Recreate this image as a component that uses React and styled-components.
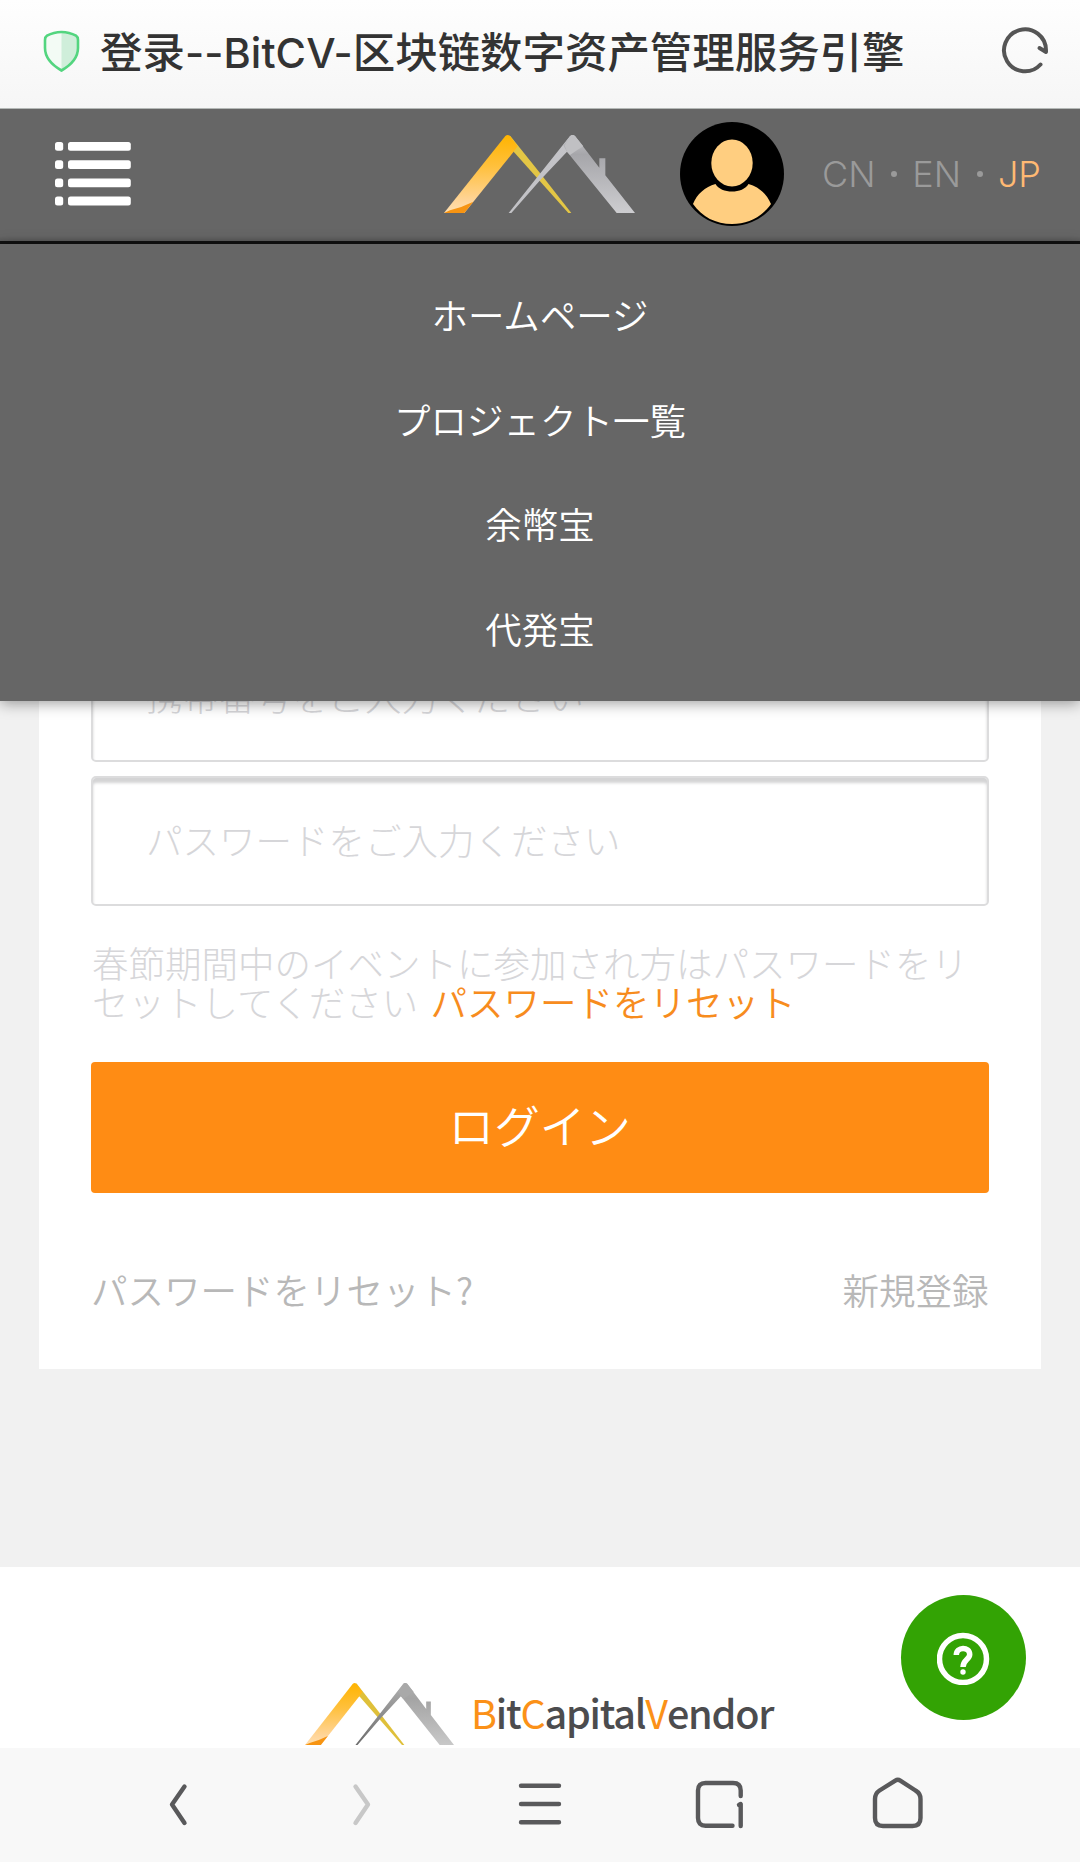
import React, { useId } from "react";
import styled, { createGlobalStyle } from "styled-components";

const GlobalStyle = createGlobalStyle`
  *, *::before, *::after { box-sizing: border-box; }
  body { margin: 0; background: #fff; }
  button { font: inherit; border: 0; padding: 0; background: none; }
  a { text-decoration: none; color: inherit; }
  svg { display: block; flex: none; }
`;

const jp = `"Noto Sans CJK JP", "Noto Sans CJK SC", sans-serif`;

const Screen = styled.div`
  width: 1080px;
  height: 1862px;
  display: flex;
  flex-direction: column;
  overflow: hidden;
  font-family: ${jp};
  font-weight: 350;
  font-size: 36.5px;
`;

const TitleBar = styled.header`
  flex: none;
  height: 109px;
  padding: 0 30px 6px 42px;
  display: flex;
  align-items: center;
  background: linear-gradient(#fefefe, #f6f6f6);
  border-bottom: 1px solid #b4b8b6;
`;

const PageTitle = styled.h1`
  flex: 1;
  margin: 0 0 0 19px;
  padding-top: 4px;
  font-family: Roboto, "Noto Sans CJK SC", sans-serif;
  font-weight: 500;
  font-size: 42.45px;
  line-height: 60px;
  color: #333;
  white-space: nowrap;
`;

const Latin = styled.span`
  font-family: Inter, sans-serif;
  font-size: 41.5px;
  letter-spacing: 0.1px;
`;

const WebView = styled.div`
  flex: 1;
  min-height: 0;
  position: relative;
  display: flex;
  flex-direction: column;
  overflow: hidden;
`;

const SiteHeader = styled.div`
  flex: none;
  height: 135px;
  padding: 0 39px 5px 55px;
  display: flex;
  align-items: center;
  background: linear-gradient(#666 0 127px, #5c5c5c 132px, #111 132px);
`;

const HeaderLogo = styled.div`
  margin: 0 45px 0 313px;
`;

const Languages = styled.nav`
  flex: 1;
  display: flex;
  align-items: center;
  justify-content: space-between;
  margin-left: 38px;
  font-family: Inter, "Liberation Sans", sans-serif;
  font-weight: 300;
  font-size: 36px;
  color: #9a9a9a;
`;

const Language = styled.a`
  color: ${(p) => (p.$active ? "#ffb973" : "inherit")};
`;

const Dot = styled.span`
  width: 6px;
  height: 6px;
  border-radius: 50%;
  background: #9a9a9a;
`;

const Menu = styled.nav`
  position: absolute;
  top: 135px;
  left: 0;
  right: 0;
  height: 457px;
  padding: 18px 0 20px;
  display: flex;
  flex-direction: column;
  background: #666;
  box-shadow: 0 2px 14px rgba(0, 0, 0, 0.4);
`;

const MenuItem = styled.a`
  flex: 1;
  display: flex;
  align-items: center;
  justify-content: center;
  color: #fff;
`;

const Main = styled.main`
  flex: none;
  height: 1323px;
  padding: 256px 39px 0;
  background: #f1f1f1;
`;

const Card = styled.form`
  height: 869px;
  padding: 132px 52.5px 0 52px;
  background: #fff;
`;

const Field = styled.input`
  display: block;
  width: 100%;
  height: 130px;
  margin-bottom: 14px;
  padding: 0 53px 4px;
  border: 2px solid #dcdcdd;
  border-radius: 5px;
  background: #fff;
  box-shadow: inset 0 5px 3px #d4d4d5;
  font: inherit;
  font-weight: 300;
  &::placeholder { color: #d6d6d9; opacity: 1; }
`;

const Notice = styled.p`
  margin: 37px 0 41px;
  padding-left: 1px;
  line-height: 39px;
  font-weight: 300;
  color: #d6d6d9;
`;

const NoticeLink = styled.a`
  display: inline-block;
  margin-left: 4px;
  font-weight: 350;
  color: #f78c1e;
`;

const Submit = styled.button`
  width: 100%;
  height: 131px;
  display: block;
  padding-bottom: 8px;
  border-radius: 4px;
  background: #ff8c14;
  color: #fff;
  font-size: 45.6px;
`;

const CardLinks = styled.div`
  display: flex;
  justify-content: space-between;
  margin-top: 70px;
  line-height: 54px;
  color: #b8b8b8;
`;

const Footer = styled.footer`
  flex: 1;
  min-height: 0;
  padding: 116px 0 0 305px;
  display: flex;
  align-items: flex-start;
  gap: 17px;
  background: #fff;
`;

const Brand = styled.div`
  margin-top: -1.5px;
  font-family: "Noto Sans CJK SC", sans-serif;
  font-weight: 500;
  font-size: 39.5px;
  line-height: 60px;
  letter-spacing: -1.2px;
  color: #4c4c4e;
`;

const Initial = styled.span`
  font-weight: 400;
  color: #fb9118;
`;

const HelpButton = styled.button`
  position: absolute;
  right: 54px;
  bottom: 28px;
  width: 125px;
  height: 125px;
  border-radius: 50%;
  background: #33a304;
  display: flex;
  align-items: center;
  justify-content: center;
`;

const Toolbar = styled.nav`
  flex: none;
  height: 114px;
  padding: 0 90px;
  display: grid;
  grid-template-columns: repeat(5, 1fr);
  align-items: center;
  justify-items: center;
  background: #f8f8f8;
`;

const ToolIcon = styled.svg.attrs({ width: 60, height: 60, viewBox: "0 0 60 60" })`
  fill: none;
  stroke: ${(p) => (p.$muted ? "#c8c8c8" : "#59595b")};
  stroke-width: 4.4;
  stroke-linecap: round;
  stroke-linejoin: round;
`;

function Roofs({ width, height, dark }) {
  const id = useId();
  return (
    <svg width={width} height={height} viewBox="42 74 573 234" preserveAspectRatio="none">
      <defs>
        <linearGradient id={id + "g"} x1="0" y1="0" x2="0" y2="1">
          <stop offset="0" stopColor="#ffb400" />
          <stop offset="0.4" stopColor="#ffc03c" />
          <stop offset="0.85" stopColor="#ffd59a" />
          <stop offset="1" stopColor="#ffe0b0" />
        </linearGradient>
        <linearGradient id={id + "s"} x1="0" y1="0" x2="0" y2="1">
          <stop offset="0" stopColor={dark ? "#c4c4c8" : "#b0b0b0"} />
          <stop offset="0.25" stopColor={dark ? "#a6a6aa" : "#a4a4a4"} />
          <stop offset="1" stopColor={dark ? "#cdcdd0" : "#c8c8c8"} />
        </linearGradient>
        <linearGradient id={id + "t"} x1="0" y1="0" x2="0" y2="1">
          <stop offset="0" stopColor={dark ? "#c4c4c8" : "#b0b0b0"} />
          <stop offset="1" stopColor={dark ? "#c2c2c6" : "#6c6c6c"} />
        </linearGradient>
      </defs>
      <path d="M238 76L251 124L415 308H424L333 192L241 77Z" fill={dark ? "#e3c645" : "#dfc03a"} />
      <path d="M42 308L226 77Q233 71 240 77L263 108L251 124L103 308Z" fill={`url(#${id}g)`} />
      <path d="M42 308L60 300Q98 290 130 274L103 308Z" fill="#f79412" />
      <path d="M236 308L420 77L430 74L426 104L411 124L333 207L244 308Z" fill={`url(#${id}t)`} />
      <path d="M508 144H526V195L615 308H560L411 124L400 105L421 77Q428 71 435 77L508 172Z" fill={`url(#${id}s)`} />
      <path d="M411 124L404 106L421 77Q428 71 435 77L460 108Q440 120 420 134Z" fill={dark ? "#c0c0c3" : "#a9a9a9"} />
    </svg>
  );
}

function Shield() {
  return (
    <svg width="39" height="44" viewBox="0 0 39 44">
      <path d="M19.5 3C25 3 30 4.500 34 6.700C36 8 36 9 36 11V19C36 28 29 36 19.500 41.500C10 36 3 28 3 19V11C3 9 3 8 5 6.700C9 4.500 14 3 19.500 3Z" fill="#f3fbf5" />
      <path d="M19.500 3C25 3 30 4.500 34 6.700C36 8 36 9 36 11V19C36 28 29 36 19.500 41.500Z" fill="#cfeeda" />
      <path d="M19.500 3C25 3 30 4.500 34 6.700C36 8 36 9 36 11V19C36 28 29 36 19.500 41.500C10 36 3 28 3 19V11C3 9 3 8 5 6.700C9 4.500 14 3 19.500 3Z" fill="none" stroke="#53d57f" strokeWidth="2.600" />
    </svg>
  );
}

function Reload() {
  return (
    <svg width="50" height="50" viewBox="0 0 50 50" fill="none" stroke="#555" strokeWidth="4" strokeLinejoin="round" strokeLinecap="round">
      <path d="M40.500 38.500A21 21 0 1 1 46 24.500" />
      <path d="M39.500 22L46 26" />
    </svg>
  );
}

function ListIcon() {
  return (
    <svg width="76" height="64" viewBox="0 0 76 64" fill="#fff">
      {[0, 18.200, 36.400, 54.600].map((y) => (
        <g key={y}>
          <rect x="0" y={y} width="8.200" height="8.800" rx="2.500" />
          <rect x="13" y={y} width="62.800" height="8.800" rx="2.500" />
        </g>
      ))}
    </svg>
  );
}

function Avatar() {
  return (
    <svg width="104" height="104" viewBox="0 0 104 104">
      <circle cx="52" cy="52" r="52" fill="#000" />
      <ellipse cx="52" cy="41" rx="20.700" ry="23.500" fill="#ffce80" />
      <path d="M35.500 62C41 72 63 72 68.500 62C79 65 87 72 91 82C82 95 68 102 52 102C36 102 22 95 13 82C17 72 25 65 35.500 62Z" fill="#ffce80" />
    </svg>
  );
}

const menuItems = ["ホームページ", "プロジェクト一覧", "余幣宝", "代発宝"];

export default function App() {
  return (
    <Screen>
      <GlobalStyle />
      <TitleBar>
        <Shield />
        <PageTitle>
          登录<Latin>--BitCV-</Latin>区块链数字资产管理服务引擎
        </PageTitle>
        <Reload />
      </TitleBar>

      <WebView>
        <SiteHeader>
          <ListIcon />
          <HeaderLogo>
            <Roofs width={191} height={78} dark />
          </HeaderLogo>
          <Avatar />
          <Languages>
            <Language>CN</Language>
            <Dot />
            <Language>EN</Language>
            <Dot />
            <Language $active>JP</Language>
          </Languages>
        </SiteHeader>

        <Main>
          <Card>
            <Field placeholder="携帯番号をご入力ください" />
            <Field placeholder="パスワードをご入力ください" />
            <Notice>
              春節期間中のイベントに参加され方はパスワードをリセットしてください{" "}
              <NoticeLink>パスワードをリセット</NoticeLink>
            </Notice>
            <Submit type="button">ログイン</Submit>
            <CardLinks>
              <a>パスワードをリセット?</a>
              <a>新規登録</a>
            </CardLinks>
          </Card>
        </Main>

        <Footer>
          <Roofs width={149} height={62} />
          <Brand>
            <Initial>B</Initial>it<Initial>C</Initial>apital<Initial>V</Initial>endor
          </Brand>
        </Footer>

        <Menu>
          {menuItems.map((label) => (
            <MenuItem key={label}>{label}</MenuItem>
          ))}
        </Menu>

        <HelpButton aria-label="help">
          <svg width="54" height="54" viewBox="0 0 54 54" fill="none" stroke="#fff" strokeWidth="5.500">
            <circle cx="26" cy="28" r="23.500" />
            <path d="M19.300 24C19.300 15.300 32.700 15.300 32.700 23.500C32.700 28.500 26 29 26 36" />
            <circle cx="26" cy="41" r="2.700" fill="#fff" stroke="none" />
          </svg>
        </HelpButton>
      </WebView>

      <Toolbar>
        <ToolIcon>
          <path d="M34.500 11.500L22 29.500L34.500 48" />
        </ToolIcon>
        <ToolIcon $muted>
          <path d="M25.500 11.500L38 29.500L25.500 48" />
        </ToolIcon>
        <ToolIcon>
          <path d="M11 10.700H49M11 29H49M11 47.300H49" />
        </ToolIcon>
        <ToolIcon>
          <path d="M42.500 50.700H15.500Q8 50.700 8 43V15.500Q8 8 15.500 8H43Q50.700 8 50.700 15.500V21" />
          <path d="M49 30L50.700 29V51" />
        </ToolIcon>
        <ToolIcon>
          <path d="M25.300 5.600Q27.800 4 30.300 5.600L45.500 15.500Q50.500 18.500 50.500 24V43Q50.500 51 42.500 51H13Q5 51 5 43V24Q5 18.500 9.500 15.500Z" />
        </ToolIcon>
      </Toolbar>
    </Screen>
  );
}
